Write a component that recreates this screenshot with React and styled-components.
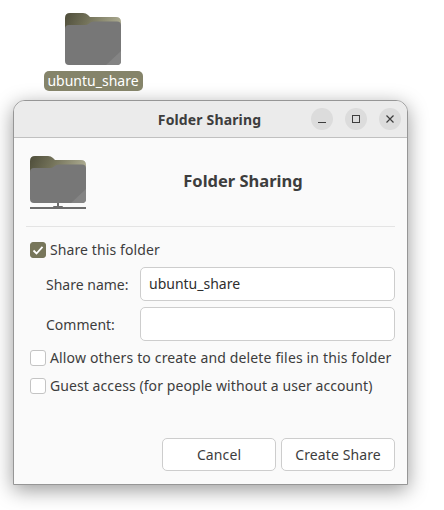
import React from 'react';
import styled, { createGlobalStyle } from 'styled-components';

const GlobalStyle = createGlobalStyle`
  html, body {
    margin: 0;
    background: #ffffff;
  }
  body {
    font-family: 'Noto Sans', 'Open Sans', sans-serif;
    color: #3d3d3d;
    width: 444px;
    height: 510px;
    overflow: hidden;
  }
`;

const Desktop = styled.div`
  width: 444px;
  height: 510px;
  box-sizing: border-box;
  padding: 13px 0 0 13px;
`;

const DesktopIcon = styled.div`
  width: 160px;
  display: flex;
  flex-direction: column;
  align-items: center;
`;

const IconLabel = styled.div`
  margin-top: 6px;
  height: 20px;
  width: 99px;
  background: #85846a;
  color: #ffffff;
  border-radius: 5px;
  font-size: 14px;
  line-height: 20px;
  text-align: center;
  white-space: nowrap;
`;

const Window = styled.div`
  width: 395px;
  height: 385px;
  margin-top: 9px;
  box-sizing: border-box;
  background: #fafafa;
  border: 1px solid #969696;
  border-radius: 12px 12px 0 0;
  box-shadow: 0 5px 20px rgba(0, 0, 0, 0.4);
  display: flex;
  flex-direction: column;
`;

const TitleBar = styled.div`
  position: relative;
  height: 37px;
  box-sizing: border-box;
  flex: none;
  background: #ebebeb;
  border-bottom: 1px solid #c0c0c0;
  border-radius: 11px 11px 0 0;
  display: flex;
  align-items: center;
  justify-content: flex-end;
  gap: 12px;
  padding-right: 6px;
`;

const WindowTitle = styled.div`
  position: absolute;
  left: 0;
  right: 2px;
  text-align: center;
  font-size: 14px;
  font-weight: 700;
  letter-spacing: 0.15px;
  color: #3d3d3d;
`;

const WindowButton = styled.div`
  width: 22px;
  height: 22px;
  border-radius: 50%;
  background: #dcdcdc;
  display: flex;
  align-items: center;
  justify-content: center;
`;

const Body = styled.div`
  flex: 1;
  display: flex;
  flex-direction: column;
  padding: 0 12px 13px 12px;
`;

const Header = styled.div`
  height: 89px;
  box-sizing: border-box;
  display: flex;
  align-items: flex-start;
  border-bottom: 1px solid #e4e4e4;
  padding: 18px 0 0 4px;
`;

const HeaderTitle = styled.div`
  flex: 1;
  text-align: center;
  font-size: 16.5px;
  font-weight: 700;
  line-height: 50px;
  color: #3d3d3d;
  padding-left: 5px;
`;

const CheckRow = styled.label`
  display: flex;
  align-items: center;
  gap: 4px;
  height: 16px;
  margin-top: ${(p) => p.$top}px;
  padding-left: 4px;
  font-size: 14px;
  line-height: 16px;
  letter-spacing: ${(p) => p.$spacing || 0.1}px;
  white-space: nowrap;
`;

const CheckBox = styled.span`
  width: 16px;
  height: 16px;
  flex: none;
  box-sizing: border-box;
  border-radius: 3px;
  background: ${(p) => (p.$checked ? '#77765a' : '#ffffff')};
  border: 1px solid ${(p) => (p.$checked ? '#77765a' : '#c4c4c4')};
  display: flex;
  align-items: center;
  justify-content: center;
`;

const Field = styled.div`
  display: grid;
  grid-template-columns: 94px 255px;
  align-items: center;
  margin-top: ${(p) => p.$top}px;
  padding-left: 20px;
  font-size: 14px;
`;

const TextBox = styled.div`
  height: 34px;
  box-sizing: border-box;
  background: #ffffff;
  border: 1px solid #cdcdcd;
  border-radius: 5px;
  padding: 0 8px;
  line-height: 32px;
  font-size: 14px;
  color: #2e2e2e;
`;

const Actions = styled.div`
  margin-top: auto;
  display: flex;
  justify-content: flex-end;
  gap: 5px;
`;

const Button = styled.div`
  width: 114px;
  height: 33px;
  box-sizing: border-box;
  background: #ffffff;
  border: 1px solid #cdcdcd;
  border-radius: 5px;
  text-align: center;
  line-height: 31px;
  font-size: 14px;
  letter-spacing: 0.1px;
  color: #3d3d3d;
`;

function FolderIcon({ id, bottom, shared }) {
  const height = shared ? 54 : 52;
  return (
    <svg width={56} height={height} viewBox={`0 0 56 ${height}`}>
      <defs>
        <linearGradient id={`${id}-back`} x1="0" y1="0" x2="1" y2="0.2">
          <stop offset="0" stopColor="#4e4d3a" />
          <stop offset="0.45" stopColor="#74735a" />
          <stop offset="1" stopColor="#a9a88e" />
        </linearGradient>
      </defs>
      <path
        d="M5 0H18Q21 0 23 2L25 4H51Q56 4 56 9V24H0V5Q0 0 5 0Z"
        fill={`url(#${id}-back)`}
      />
      <path
        d={`M4 12H20Q22 12 24 10.5Q26 8.500 29 8.500H52Q56 8.500 56 12.500V${bottom - 4}Q56 ${bottom} 52 ${bottom}H4Q0 ${bottom} 0 ${bottom - 4}V16Q0 12 4 12Z`}
        fill="#777777"
      />
      <path d={`M41 ${bottom}L56 ${bottom - 14}V${bottom - 4}Q56 ${bottom} 52 ${bottom}Z`} fill="#848484" />
      {shared && (
        <g fill="#6c6c6c">
          <rect x="27" y={bottom} width="2" height="4" />
          <rect x="23" y={bottom + 3} width="10" height="3" rx="1" />
          <rect x="0" y={bottom + 4} width="56" height="2" />
        </g>
      )}
    </svg>
  );
}

function Check() {
  return (
    <svg width="12" height="12" viewBox="0 0 12 12" fill="none">
      <path d="M1.5 6.5L4.5 9.5L10.5 2.8" stroke="#ffffff" strokeWidth="1.8" />
    </svg>
  );
}

export default function App() {
  return (
    <>
      <GlobalStyle />
      <Desktop>
        <DesktopIcon>
          <FolderIcon id="desk" bottom={52} />
          <IconLabel>ubuntu_share</IconLabel>
        </DesktopIcon>
        <Window>
          <TitleBar>
            <WindowTitle>Folder Sharing</WindowTitle>
            <WindowButton>
              <svg width="10" height="10" viewBox="0 0 10 10">
                <rect x="1" y="8" width="8" height="1" fill="#3d3d3d" />
              </svg>
            </WindowButton>
            <WindowButton>
              <svg width="10" height="10" viewBox="0 0 10 10" fill="none">
                <rect x="1.5" y="1.500" width="7" height="7" stroke="#3d3d3d" />
              </svg>
            </WindowButton>
            <WindowButton>
              <svg width="10" height="10" viewBox="0 0 10 10" fill="none">
                <path d="M1.5 1.5L8.5 8.5M8.5 1.5L1.5 8.5" stroke="#3d3d3d" strokeWidth="1.2" />
              </svg>
            </WindowButton>
          </TitleBar>
          <Body>
            <Header>
              <FolderIcon id="head" bottom={47} shared />
              <HeaderTitle>Folder Sharing</HeaderTitle>
            </Header>
            <CheckRow $top={15}>
              <CheckBox $checked>
                <Check />
              </CheckBox>
              Share this folder
            </CheckRow>
            <Field $top={9}>
              <span>Share name:</span>
              <TextBox>ubuntu_share</TextBox>
            </Field>
            <Field $top={6}>
              <span>Comment:</span>
              <TextBox />
            </Field>
            <CheckRow $top={9} $spacing={0.15}>
              <CheckBox />
              Allow others to create and delete files in this folder
            </CheckRow>
            <CheckRow $top={12} $spacing={0.08}>
              <CheckBox />
              Guest access (for people without a user account)
            </CheckRow>
            <Actions>
              <Button>Cancel</Button>
              <Button>Create Share</Button>
            </Actions>
          </Body>
        </Window>
      </Desktop>
    </>
  );
}
